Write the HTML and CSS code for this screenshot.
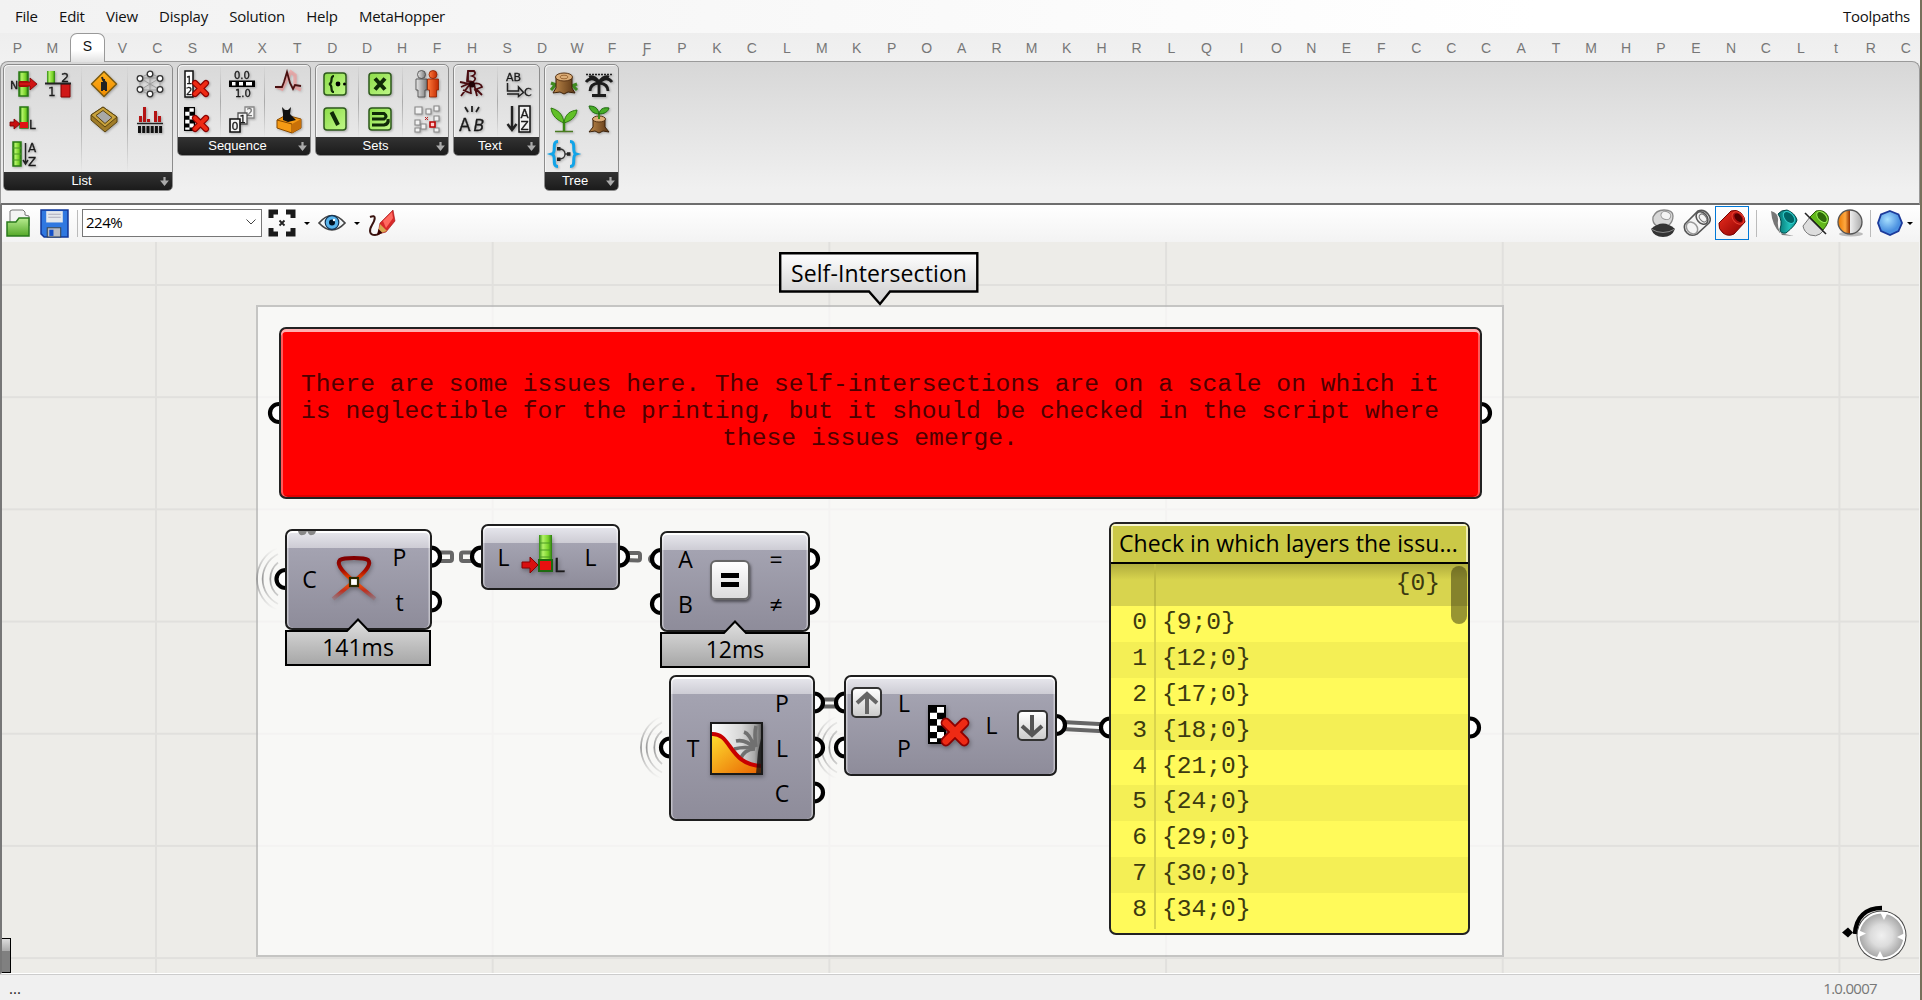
FILE: index.html
```html
<!DOCTYPE html>
<html lang="en">
<head>
<meta charset="utf-8">
<title>Toolpaths</title>
<link rel="stylesheet" href="styles.css">
</head>
<body>
<svg class="defs" width="0" height="0" aria-hidden="true">
  <defs>
    <linearGradient id="green" x1="0" x2="1" y1="0" y2="0"><stop offset="0" stop-color="#2f8a12"/><stop offset=".3" stop-color="#b2f266"/><stop offset=".7" stop-color="#7ad32a"/><stop offset="1" stop-color="#2a7d10"/></linearGradient>
    <linearGradient id="wood" x1="0" x2="1" y1="0" y2="0"><stop offset="0" stop-color="#c08a4a"/><stop offset="1" stop-color="#5a3515"/></linearGradient>
    <linearGradient id="orange" x1="0" x2="0" y1="0" y2="1"><stop offset="0" stop-color="#ffb21c"/><stop offset="1" stop-color="#f08c00"/></linearGradient>
    <linearGradient id="greyman" x1="0" x2="1" y1="0" y2="0"><stop offset="0" stop-color="#e8e8e8"/><stop offset="1" stop-color="#777"/></linearGradient>
    <linearGradient id="redman" x1="0" x2="1" y1="0" y2="0"><stop offset="0" stop-color="#ff7a3c"/><stop offset="1" stop-color="#c02800"/></linearGradient>
    <linearGradient id="tile" x1="0" x2="1" y1="0" y2="1"><stop offset="0" stop-color="#8cdc48"/><stop offset="1" stop-color="#c0f888"/></linearGradient>
    <linearGradient id="folder" x1="0" x2="0" y1="0" y2="1"><stop offset="0" stop-color="#b8ec90"/><stop offset="1" stop-color="#54a828"/></linearGradient>
    <linearGradient id="reds" x1="0" x2="1" y1="0" y2="1"><stop offset="0" stop-color="#f03020"/><stop offset="1" stop-color="#8a0000"/></linearGradient>
    <linearGradient id="teals" x1="0" x2="1" y1="0" y2="0"><stop offset="0" stop-color="#057070"/><stop offset=".6" stop-color="#20c0b8"/><stop offset="1" stop-color="#088"/></linearGradient>
    <linearGradient id="halfball" x1="0" x2="1" y1="0" y2="0"><stop offset="0" stop-color="#e87800"/><stop offset=".3" stop-color="#ffa840"/><stop offset=".5" stop-color="#903000"/><stop offset=".5" stop-color="#eee"/><stop offset="1" stop-color="#aaa"/></linearGradient>
    <radialGradient id="gem" cx=".4" cy=".35"><stop offset="0" stop-color="#a8e0ff"/><stop offset="1" stop-color="#4a90e0"/></radialGradient>
    <radialGradient id="dial"><stop offset="0" stop-color="#f0f0f0"/><stop offset=".5" stop-color="#dcdcdc"/><stop offset="1" stop-color="#a8a8a8"/></radialGradient>
    <linearGradient id="sun" x1="0" x2="1" y1="0" y2="1"><stop offset="0" stop-color="#ffe030"/><stop offset="1" stop-color="#e86000"/></linearGradient>
    <linearGradient id="sky" x1="0" x2="1" y1="0" y2="0"><stop offset="0" stop-color="#fff"/><stop offset=".6" stop-color="#d6d6d6"/><stop offset=".85" stop-color="#aaa"/><stop offset="1" stop-color="#555"/></linearGradient>
    <linearGradient id="loop" x1="0" x2="0" y1="0" y2="1"><stop offset="0" stop-color="#800000"/><stop offset=".3" stop-color="#a80c00"/><stop offset=".58" stop-color="#ff5a00"/><stop offset=".8" stop-color="#c03020"/><stop offset="1" stop-color="#a05050" stop-opacity=".3"/></linearGradient>
    <linearGradient id="tag" x1="0" x2="0" y1="0" y2="1"><stop offset="0" stop-color="#fff"/><stop offset=".75" stop-color="#d8d8d8"/><stop offset="1" stop-color="#d4d4d4"/></linearGradient>
    <linearGradient id="timer" x1="0" x2="0" y1="0" y2="1"><stop offset="0" stop-color="#e0e0e0"/><stop offset="1" stop-color="#a6a6a6"/></linearGradient>
    <linearGradient id="fadeWave" x1="0" x2="0" y1="0" y2="1"><stop offset="0" stop-color="#aaa" stop-opacity="0"/><stop offset=".5" stop-color="#999"/><stop offset="1" stop-color="#aaa" stop-opacity="0"/></linearGradient>
    <symbol id="cross" viewBox="0 0 14 14"><path d="M3 3L11 11M11 3L3 11" stroke="#8c0000" stroke-width="4.600" stroke-linecap="round"/><path d="M3 3L11 11M11 3L3 11" stroke="#ee2a14" stroke-width="3" stroke-linecap="round"/></symbol>
    <symbol id="checker" viewBox="0 0 9 20" preserveAspectRatio="none"><rect width="9" height="20" fill="#000"/><path d="M1 4h3.500v3.200h-3.500zM1 10.600h3.500v3.200h-3.500zM4.500 1h3.500v3h-3.500zM4.500 7.300h3.500v3.200h-3.500zM4.500 13.800h3.500v3.200h-3.500zM1 17h3.500v2h-3.500z" fill="#fff"/></symbol>
  </defs>
</svg>

<div class="window">
  <header class="menubar">
    <nav><span>File</span><span>Edit</span><span>View</span><span>Display</span><span>Solution</span><span>Help</span><span>MetaHopper</span></nav>
    <span class="doc">Toolpaths</span>
  </header>

  <div class="tabs">
    <i>P</i><i>M</i><i class="active">S</i><i>V</i><i>C</i><i>S</i><i>M</i><i>X</i><i>T</i><i>D</i><i>D</i><i>H</i><i>F</i><i>H</i><i>S</i><i>D</i><i>W</i><i>F</i><i>Ƒ</i><i>P</i><i>K</i><i>C</i><i>L</i><i>M</i><i>K</i><i>P</i><i>O</i><i>A</i><i>R</i><i>M</i><i>K</i><i>H</i><i>R</i><i>L</i><i>Q</i><i>I</i><i>O</i><i>N</i><i>E</i><i>F</i><i>C</i><i>C</i><i>C</i><i>A</i><i>T</i><i>M</i><i>H</i><i>P</i><i>E</i><i>N</i><i>C</i><i>L</i><i>t</i><i>R</i><i>C</i>
  </div>

  <div class="ribbon">
    <section class="panel list">
      <div class="groups">
        <div class="group two">
          <svg viewBox="0 0 28 28"><path d="M10 2h9v24h-9z" fill="url(#green)" stroke="#2a7a14" stroke-width="1.500"/><path d="M10 11h9v6h-9z" fill="#c01010"/><path d="M10 12h11v-4l7 6-7 6v-4H10z" fill="#d01414" stroke="#7a0000" stroke-width=".8"/><text x="1" y="18.500" class="ic" font-size="11">N</text></svg>
          <svg viewBox="0 0 28 28"><path d="M3 1h8v12H3z" fill="url(#green)"/><path d="M17 14h9v13h-9z" fill="#d01818" stroke="#800" stroke-width="1"/><path d="M1 13.500h26" stroke="#222" stroke-width="2"/><text x="17" y="12" class="ic" font-size="13">2</text><text x="4" y="26" class="ic" font-size="12">1</text></svg>
          <svg viewBox="0 0 28 28"><path d="M11 2h8v21h-8z" fill="url(#green)" stroke="#2a7a14" stroke-width="1.500"/><path d="M11 17h8v6h-8z" fill="#e01414"/><path d="M1 17h4v-3l6 5-6 5v-3H1z" fill="#c81010" stroke="#7a0000" stroke-width=".8"/><text x="20" y="24" class="ic" font-size="12">L</text></svg>
          <span></span>
          <svg viewBox="0 0 28 28"><path d="M4 2h8v24H4z" fill="url(#green)" stroke="#2a7a14" stroke-width="1.500"/><path d="M4 8h8M4 14h8M4 20h8" stroke="#4a9a24"/><path d="M16.500 3v20M14 20l2.500 4 2.500-4" stroke="#222" stroke-width="1.500" fill="none"/><text x="19" y="12" class="ic" font-size="12">A</text><text x="19" y="26" class="ic" font-size="12">Z</text></svg>
        </div>
        <div class="group">
          <svg viewBox="0 0 28 28"><path d="M14 1.500L26.500 14 14 26.500 1.500 14z" fill="url(#orange)" stroke="#7a5a10" stroke-width="1.500" stroke-linejoin="round"/><path d="M12 7l1 3 3 3v8M12 12v9M14 9v11" stroke="#222" stroke-width="2" fill="none"/></svg>
          <svg viewBox="0 0 28 28"><path d="M1 10l12-8 14 10v5L15 27 1 15z" fill="#a07c28" stroke="#5a4410" stroke-width="1"/><path d="M1 10l12-8 14 10-12 10z" fill="#c8a23c" stroke="#5a4410"/><path d="M6 10.500l7-5 9 7-7 6z" fill="#a8a8a8" stroke="#5a4410"/></svg>
        </div>
        <div class="group">
          <svg viewBox="0 0 28 28"><path d="M14 3L24 8v12L14 25 4 20V8zM4 8l20 12M24 8L4 20M14 3v22M4 8h20M4 20h20" stroke="#999" fill="none" stroke-width=".9"/><g fill="#fff" stroke="#333" stroke-width="1.300"><circle cx="14" cy="4" r="2.800"/><circle cx="24" cy="8.500" r="2.800"/><circle cx="24" cy="19.500" r="2.800"/><circle cx="14" cy="24" r="2.800"/><circle cx="4" cy="19.500" r="2.800"/><circle cx="4" cy="8.500" r="2.800"/></g></svg>
          <svg viewBox="0 0 28 28"><path d="M4.500 17v-6M8.500 17V2M12.500 17v-3M19.500 17V6M23.500 17v-6" stroke="#b41414" stroke-width="3"/><path d="M1 18.500h26" stroke="#222" stroke-width="1.400"/><path d="M3.500 21v7M7.700 21v7M12 21v7M16.200 21v7M20.400 21v7M24.600 21v7" stroke="#111" stroke-width="3"/></svg>
        </div>
      </div>
      <footer><b>List</b><svg viewBox="0 0 10 10"><path d="M4 1h2v3h3L5 9 1 4h3z" fill="#aaa"/></svg></footer>
    </section>

    <section class="panel three">
      <div class="groups">
        <div class="group">
          <svg viewBox="0 0 28 28"><path d="M2 1h8v26H2z" fill="#fff" stroke="#111" stroke-width="1.500"/><text x="3" y="14" class="ic" font-size="10">1</text><text x="3" y="25" class="ic" font-size="10">2</text><use href="#cross" x="8" y="9" width="19" height="19"/></svg>
          <svg viewBox="0 0 28 28"><use href="#checker" x="1" y="2" width="11" height="24"/><use href="#cross" x="8" y="9" width="19" height="19"/></svg>
        </div>
        <div class="group">
          <svg viewBox="0 0 28 28"><text x="6" y="8.500" class="ic" font-size="10">0.0</text><path d="M1 10.500h26v6.500H1z" fill="#000"/><path d="M4 12h3.500v3.500H4zM11 12h4v3.500h-4zM18 12h6v3.500h-6z" fill="#fff"/><text x="7" y="26.500" class="ic" font-size="10">1.0</text></svg>
          <svg viewBox="0 0 28 28"><g fill="#f4f4f4"><path d="M17 2h9v11h-9z" stroke="#888" stroke-width="1.300"/><path d="M10 8h9v11h-9z" stroke="#555" stroke-width="1.300"/><path d="M2 14h10v13H2z" stroke="#111" stroke-width="1.600"/></g><text x="18.500" y="11" class="ic" font-size="10" opacity=".6">2</text><text x="11.500" y="17.500" class="ic" font-size="10">1</text><text x="3.500" y="25" class="ic" font-size="11">0</text></svg>
        </div>
        <div class="group">
          <svg viewBox="0 0 28 28"><path d="M2 17l5 2 4-8 5-9 4 3v12l6 3" stroke="#ff8a8a" stroke-width="3.500" fill="none" opacity=".5"/><path d="M0 17h7l2-5 3-10 3 11 3 6 2-4 6 1" stroke="#4a1010" stroke-width="1.800" fill="none"/></svg>
          <svg viewBox="0 0 28 28"><path d="M2 15l9-5 15 4v9l-9 5-15-5z" fill="#f59a14" stroke="#8a4a00"/><path d="M2 15l15 4v9" fill="none" stroke="#8a4a00"/><path d="M17 19l9-5v9l-9 5z" fill="#c87008"/><path d="M8 15V9L7 2l3 3h3l3-3-1 7 6 6-8 2z" fill="#111"/></svg>
        </div>
      </div>
      <footer><b>Sequence</b><svg viewBox="0 0 10 10"><path d="M4 1h2v3h3L5 9 1 4h3z" fill="#aaa"/></svg></footer>
    </section>

    <section class="panel three">
      <div class="groups">
        <div class="group">
          <svg viewBox="0 0 28 28"><rect x="3" y="3" width="22" height="22" rx="3" fill="url(#tile)" stroke="#2e5a1c" stroke-width="1.500"/><path d="M13 6c-5 0 0 7-5 8 5 1 0 8 5 8" stroke="#102a08" stroke-width="2.200" fill="none"/><circle cx="17" cy="14" r="2.400"/><circle cx="23.500" cy="14" r="1.500"/></svg>
          <svg viewBox="0 0 28 28"><rect x="3" y="3" width="22" height="22" rx="3" fill="url(#tile)" stroke="#2e5a1c" stroke-width="1.500"/><path d="M10.500 7l6.500 13" stroke="#102a08" stroke-width="4"/></svg>
        </div>
        <div class="group">
          <svg viewBox="0 0 28 28"><rect x="3" y="3" width="22" height="22" rx="3" fill="url(#tile)" stroke="#2e5a1c" stroke-width="1.500"/><path d="M9 8.500l10 11M19 8.500l-10 11" stroke="#102a08" stroke-width="4"/></svg>
          <svg viewBox="0 0 28 28"><rect x="3" y="3" width="22" height="22" rx="3" fill="url(#tile)" stroke="#2e5a1c" stroke-width="1.500"/><path d="M6 8.500h12q4 2.700 0 5.500H6M6 20h12q5-1 4-6" stroke="#102a08" stroke-width="3.200" fill="none"/></svg>
        </div>
        <div class="group">
          <svg viewBox="0 0 28 28"><g stroke="#444" stroke-width=".8"><circle cx="8.500" cy="4.500" r="4" fill="url(#greyman)"/><path d="M3 9h11v11h-2v7H5v-7H3z" fill="url(#greyman)"/></g><g stroke="#8a2000" stroke-width=".8"><circle cx="20" cy="4.500" r="4" fill="url(#redman)"/><path d="M14.500 9h11v11h-2v7h-7v-7h-2z" fill="url(#redman)"/></g></svg>
          <svg viewBox="0 0 28 28"><g fill="#f2f2f2" stroke="#888" stroke-width="1.100"><path d="M2 2h7v7H2zM13 4h5v5h-5zM21 1h5v5h-5zM2 15h5v5H2zM8 19h5v5H8zM2 23h5v4H2zM21 11h5v5h-5zM21 23h5v4h-5z"/></g><path d="M17 17h5v5h-5z" fill="#fcc" stroke="#b00" stroke-width="1.600"/><path d="M12 12l3 3M15 12l-3 3" stroke="#b22"/></svg>
        </div>
      </div>
      <footer><b>Sets</b><svg viewBox="0 0 10 10"><path d="M4 1h2v3h3L5 9 1 4h3z" fill="#aaa"/></svg></footer>
    </section>

    <section class="panel text">
      <div class="groups">
        <div class="group">
          <svg viewBox="0 0 28 28"><g fill="none" stroke="#4a0c10" stroke-width="1.800"><path d="M10 1h6q3 3-2 5 6 2 1 6l-6-1zM10 2v9M3 26l9-12 1 10M5 20l7 3M14 14q9-2 10 3l-8 3M16 14l3 12M18 19l6 6M2 12l5 1 6 1M3 17l9-4"/></g><circle cx="14" cy="14.500" r="3" fill="#210406"/></svg>
          <svg viewBox="0 0 28 28"><path d="M7 2l3 5M14 1v6M21 2l-3 5" stroke="#222" stroke-width="1.800"/><text x="1" y="26" class="ic" font-size="17">A</text><text x="15.500" y="26" class="ic slant" font-size="16">B</text></svg>
        </div>
        <div class="group">
          <svg viewBox="0 0 28 28"><text x="1" y="11" class="ic" font-size="11">AB</text><path d="M2.500 13v8h11v-4l5 5.500-5 4V24H2" fill="none" stroke="#222" stroke-width="1.500"/><text x="19" y="26" class="ic" font-size="11">C</text></svg>
          <svg viewBox="0 0 28 28"><path d="M7 1v23M2.500 19L7 25l4.500-6" stroke="#222" stroke-width="2.400" fill="none"/><path d="M14 1h11v26H14z" fill="#f2f2f2" stroke="#111" stroke-width="1.500"/><text x="15.500" y="12.500" class="ic" font-size="12">A</text><text x="15.500" y="25" class="ic" font-size="12">Z</text></svg>
        </div>
      </div>
      <footer><b>Text</b><svg viewBox="0 0 10 10"><path d="M4 1h2v3h3L5 9 1 4h3z" fill="#aaa"/></svg></footer>
    </section>

    <section class="panel tree">
      <div class="groups">
        <div class="group two">
          <svg viewBox="0 0 28 28"><path d="M1 13l5 2M1 20l5-6M27 14l-5 2M27 20l-5-5" stroke="#3e8a20" stroke-width="3"/><path d="M6 7v11l-3 5 7-1 4 2 4-2 7 1-3-5V7z" fill="url(#wood)" stroke="#3a2008"/><ellipse cx="14" cy="7" rx="8.500" ry="4" fill="#dcae78" stroke="#5a3515"/><ellipse cx="14" cy="7" rx="4" ry="1.800" fill="none" stroke="#a06c38"/></svg>
          <svg viewBox="0 0 28 28"><path d="M1 4.500h26" stroke="#222" stroke-width="1.500" stroke-dasharray="2 1"/><path d="M14 26V13M7 25.500h14M14 13C9 7 4 8 1 12M14 13c5-6 10-5 13-1M14 12C10 6 7 6 4 7M14 12c4-6 7-6 10-5M13 13c-6 1-8 4-8 8M15 13c6 1 8 4 8 8" stroke="#1c1c1c" stroke-width="2.800" fill="none"/></svg>
          <svg viewBox="0 0 28 28"><path d="M14 26V16" stroke="#3a8a14" stroke-width="2.500"/><path d="M14 18C13 9 8 5 1 3c1 8 6 12 13 15zM14 18C15 9 20 6 27 5c-1 7-6 11-13 13z" fill="#62c028" stroke="#2e7a10"/><path d="M5 26.500h18" stroke="#4a7a20" stroke-width="1.500"/></svg>
          <svg viewBox="0 0 28 28"><path d="M8 14v8l-4 5 6-1 4 2 4-2 6 1-4-5v-8z" fill="url(#wood)" stroke="#3a2008"/><ellipse cx="14" cy="14" rx="6.500" ry="3" fill="#dcae78" stroke="#5a3515"/><path d="M14 14V8" stroke="#3a8a14" stroke-width="2"/><path d="M14 9C13 3 10 1 4 1c1 5 5 8 10 8zM14 9c1-5 4-7 10-6-1 4-5 6-10 6z" fill="#48ac28" stroke="#1e6a10"/></svg>
          <svg viewBox="0 0 28 28"><path d="M8 1.500c-7 0-1 11-6 12.500 5 1.500-1 12.500 6 12.500M20 1.500c7 0 1 11 6 12.500-5 1.500 1 12.500-6 12.500" stroke="#12a4e8" stroke-width="3" fill="none"/><path d="M9 9q6 0 6 5t-6 5M15 14h5" stroke="#333" fill="none" stroke-width="1.300"/><path d="M7 7h3.500v3.500H7zM7 17.500h3.500V21H7zM17 12.300h3.500v3.500H17z" fill="#222"/></svg>
        </div>
      </div>
      <footer><b>Tree</b><svg viewBox="0 0 10 10"><path d="M4 1h2v3h3L5 9 1 4h3z" fill="#aaa"/></svg></footer>
    </section>
  </div>

  <div class="toolbar">
    <svg class="t-open" viewBox="0 0 28 28" width="28" height="28"><path d="M5 2l2-1h11l2 2v3l4 1v10H5z" fill="#f4f4f4" stroke="#777"/><path d="M2 13h9l3-4h10v18H2z" fill="url(#folder)" stroke="#2a7a1c" stroke-width="1.500"/></svg>
    <svg class="t-save" viewBox="0 0 28 28" width="29" height="29"><path d="M1 1h26v26H4l-3-3z" fill="#2f78e0" stroke="#12389a" stroke-width="1.500"/><path d="M6 2h16v11H6z" fill="#e4e8ec"/><path d="M8 5h12M8 8h12" stroke="#aab"/><path d="M7 18h13v9H7z" fill="#b8bcc4" stroke="#345"/><path d="M9 20h4v6H9z" fill="#1450c8"/></svg>
    <hr>
    <div class="combo"><span>224%</span><svg viewBox="0 0 10 6" width="10" height="6"><path d="M.5.500L5 5 9.500.500" fill="none" stroke="#444"/></svg></div>
    <svg class="t-fit" viewBox="0 0 28 28" width="28" height="28"><path d="M3 9V3h7M18 3h7v6M25 19v6h-7M10 25H3v-6" fill="none" stroke="#1a1a1a" stroke-width="5"/><path d="M11.500 11.500l5 5M16.500 11.500l-5 5" stroke="#222" stroke-width="1.800"/></svg>
    <span class="caret"></span>
    <svg class="t-eye" viewBox="0 0 28 28" width="28" height="28"><path d="M1 14Q14-1 27 14 14 28 1 14z" fill="#f2f6f8" stroke="#444" stroke-width="1.700"/><circle cx="14" cy="13.500" r="6.800" fill="#58b4ec" stroke="#135" stroke-width="1.200"/><circle cx="14" cy="13.500" r="3" fill="#012"/><circle cx="16" cy="11" r="1.200" fill="#fff"/></svg>
    <span class="caret"></span>
    <svg class="t-sketch" viewBox="0 0 28 28" width="28" height="28"><path d="M2 8c7-3 5 3 2 8s-3 10 3 10 6-4 7-6" fill="none" stroke="#3a1410" stroke-width="2"/><path d="M10 25l2-11L25 1l2 11-9 11z" fill="#d82a2a" stroke="#a01010" stroke-width=".6"/><path d="M15 12l9-9 1 6-7 10z" fill="#ff6a60"/><path d="M10 25l2-10 7 7z" fill="#d8a850"/><path d="M9 26l1.500-6 4 4z" fill="#300"/></svg>
    <div class="right">
      <svg viewBox="0 0 28 28"><path d="M4 8Q7 1 15 1q9 0 9 6t-5 10H8q-5-3-4-9z" fill="#d8d8d8" stroke="#888" stroke-width="1.300"/><ellipse cx="17" cy="6.500" rx="5" ry="4" fill="#f4f4f4" stroke="#999" transform="rotate(20 17 6)"/><path d="M2 20q12-11 24 0-3 8-12 8T2 20z" fill="#333"/><path d="M2 20q12 7 24 0" fill="none" stroke="#888"/></svg>
      <svg viewBox="0 0 28 28"><path d="M2 15L15 2q6-2 10 3t1 9L14 25q-6 3-10-1t-2-9z" fill="#f4f4f4" stroke="#555" stroke-width="1.600"/><ellipse cx="19" cy="9" rx="5" ry="7" transform="rotate(-40 19 9)" fill="none" stroke="#555" stroke-width="1.600"/><ellipse cx="9" cy="19" rx="5" ry="6.500" transform="rotate(-40 9 19)" fill="none" stroke="#999" stroke-width="1.500"/><ellipse cx="20" cy="9" rx="3" ry="4.500" transform="rotate(-40 20 9)" fill="none" stroke="#777"/></svg>
      <span class="selected"><svg viewBox="0 0 28 28"><path d="M1 14L13 2q6-2 10 2t4 9L16 25q-6 3-11-1T1 14z" fill="url(#reds)" stroke="#700" stroke-width="1"/><ellipse cx="20" cy="9" rx="5" ry="7" transform="rotate(-42 20 9)" fill="#b01010" stroke="#e84030"/><ellipse cx="20.500" cy="9" rx="3" ry="5" transform="rotate(-42 20 9)" fill="#500"/></svg></span>
      <hr>
      <svg viewBox="0 0 28 28"><path d="M1 2q8 2 7 10t4 14l12 1-14-3Q2 16 1 2z" fill="#555" opacity=".8"/><path d="M8 5q3-4 9-4 8 3 10 10-1 5-11 13-6 1-6-4 3-8-2-15z" fill="url(#teals)" stroke="#044"/><ellipse cx="19" cy="8.500" rx="4.500" ry="7" transform="rotate(-42 19 8.500)" fill="#066" stroke="#3cc"/></svg>
      <svg viewBox="0 0 28 28"><path d="M1 17l7-9 13 14-3 3q-4 3-10 1-6-3-7-9z" fill="#ddd" stroke="#777"/><path d="M8 8l6-6q8-2 12 5 2 6-5 14z" fill="#62b81c" stroke="#2a5a08"/><ellipse cx="20" cy="8" rx="4" ry="6.500" transform="rotate(-42 20 8)" fill="#2e6a08" stroke="#9e5"/><path d="M3 4l21 21" stroke="#222" stroke-width="1.600"/></svg>
      <svg viewBox="0 0 28 28"><ellipse cx="15" cy="25" rx="12" ry="2.500" fill="#bbb"/><circle cx="14" cy="13" r="12" fill="url(#halfball)" stroke="#555" stroke-width="1.300"/></svg>
      <hr class="last">
      <svg viewBox="0 0 28 28"><path d="M14 2l8.500 3.500L26 14l-3.500 8L14 26l-9-4-3-8 3-8.500z" fill="url(#gem)" stroke="#1c3a9a" stroke-width="1.800"/></svg>
      <span class="caret"></span>
    </div>
  </div>

  <main class="canvas">
    <div class="backdrop"></div>
    <svg class="wires" viewBox="0 242 1918 731" width="1918" height="731">
      <g fill="none" stroke="#666" stroke-width="4">
        <path d="M436 552.500h14q2 0 2 2v4.500q0 2-2 2h-14"/>
        <path d="M476 552.500h-13q-2 0-2 2v4.500q0 2 2 2h13"/>
        <path d="M624 553h14q2 0 2 2v3.500q0 2-2 2l-14-.500"/>
        <path d="M820 699.500h18M820 706.500h18"/>
        <path d="M1062 722l46 2.500M1062 729l46 2.500"/>
      </g>
      <circle cx="653" cy="559" r="5" fill="#666"/>
      <g fill="none" stroke="url(#fadeWave)" stroke-width="1.700">
        <path d="M277 548a34 34 0 0 0 0 62M278 554a28 28 0 0 0 0 50M278 562.500a21.500 21.500 0 0 0 0 33"/>
        <path d="M661 716.500a34 34 0 0 0 0 62M662 722.500a28 28 0 0 0 0 50M662 731a21.500 21.500 0 0 0 0 33"/>
        <path d="M836 716.500a34 34 0 0 0 0 62M837 722.500a28 28 0 0 0 0 50M837 731a21.500 21.500 0 0 0 0 33"/>
      </g>
      <g class="grips">
        <circle cx="279" cy="413" r="9"/><circle cx="1481" cy="413" r="9"/>
        <circle cx="285.500" cy="579" r="9"/><circle cx="431" cy="556.700" r="9"/><circle cx="431" cy="601.500" r="9"/>
        <circle cx="481" cy="556.700" r="9"/><circle cx="619" cy="556.700" r="9"/>
        <circle cx="661" cy="559" r="9"/><circle cx="661" cy="604" r="9"/><circle cx="809" cy="559" r="9"/><circle cx="809" cy="604" r="9"/>
        <circle cx="670" cy="747.500" r="9"/><circle cx="814" cy="702.500" r="9"/><circle cx="814" cy="747.500" r="9"/><circle cx="814" cy="792.500" r="9"/>
        <circle cx="845" cy="702.500" r="9"/><circle cx="845" cy="747.500" r="9"/><circle cx="1056" cy="725" r="9"/>
        <circle cx="1110" cy="727.500" r="9"/><circle cx="1470" cy="727.500" r="9"/>
      </g>
    </svg>

    <div class="callout title"><svg viewBox="0 0 200 54" width="200" height="54"><path d="M1.200 1.200H198.300V39.500H111L101 52 90 39.500H1.200z" fill="url(#tag)" stroke="#000" stroke-width="2.400"/></svg><span>Self-Intersection</span></div>

    <div class="note">There are some issues here. The self-intersections are on a scale on which it<br>is neglectible for the printing, but it should be checked in the script where<br>these issues emerge.</div>

    <div class="node n-self">
      <div class="io"><span>C</span></div>
      <svg class="icon" viewBox="0 0 44 46" width="44" height="46"><path d="M1 44L25 24Q41 10 36 5 33 3 22 3 11 3 8 5 3 10 19 24L43 44" fill="none" stroke="url(#loop)" stroke-width="4" stroke-linejoin="round"/><rect x="18" y="23" width="8" height="8" fill="#fff" stroke="#2a2a00" stroke-width="2.200"/></svg>
      <div class="io"><span>P</span><span>t</span></div>
      <svg class="zig" viewBox="0 0 18 5" width="18" height="5"><path d="M0 0q1 5 5 4 3 0 4-4 2 5 5 4 3 0 4-4z" fill="#888"/></svg>
    </div>
    <div class="callout timer t-self"><svg viewBox="0 0 146 48" width="146" height="48"><path d="M1 13H62L73 1.500 84 13H145V47H1z" fill="url(#timer)" stroke="#000" stroke-width="2"/></svg><span>141ms</span></div>

    <div class="node n-length">
      <div class="io"><span>L</span></div>
      <svg class="icon" viewBox="0 0 44 40" width="44" height="40"><path d="M17 1h13v36H17z" fill="url(#green)"/><path d="M18 9h11M18 16h11M18 23h11" stroke="#4a9a24"/><path d="M17 26h13v11H17z" fill="#e81010" stroke="#1d6a10" stroke-width="2"/><path d="M0 28h8v-5l8 8-8 8v-5H0z" fill="#d81010" stroke="#8a0000"/><text x="32" y="38" class="ic" font-size="19">L</text></svg>
      <div class="io"><span>L</span></div>
    </div>

    <div class="node n-equal">
      <div class="io"><span>A</span><span>B</span></div>
      <span class="eq"></span>
      <div class="io"><span>=</span><span>≠</span></div>
    </div>
    <div class="callout timer t-equal"><svg viewBox="0 0 150 48" width="150" height="48"><path d="M1 13H64L75 1.500 86 13H149V47H1z" fill="url(#timer)" stroke="#000" stroke-width="2"/></svg><span>12ms</span></div>

    <div class="node n-stats">
      <div class="io"><span>T</span></div>
      <svg class="icon" viewBox="0 0 53 53" width="53" height="53"><rect x="1" y="1" width="51" height="51" fill="url(#sky)"/><path d="M30 38Q34 27 45 27M45 27Q36 24 24 27M44 26Q36 17 26 19M44 25Q40 12 34 10M46 25Q44 12 46 4" fill="none" stroke="#707070" stroke-width="3.600"/><path d="M1 12C22 10 18 43 52 44V52H1z" fill="url(#sun)"/><path d="M1 12C22 10 18 43 52 44" fill="none" stroke="#c80000" stroke-width="4"/><path d="M48 30L52 12V52H46z" fill="#111" opacity=".75"/><rect x="1" y="1" width="51" height="51" fill="none" stroke="#1a1a1a" stroke-width="2"/></svg>
      <div class="io"><span>P</span><span>L</span><span>C</span></div>
    </div>

    <div class="node n-cull">
      <span class="flat up"><svg viewBox="0 0 24 24" width="24" height="24"><path d="M12 23V3M2 12L12 3l10 9" fill="none" stroke="#666" stroke-width="4"/></svg></span>
      <div class="io"><span>L</span><span>P</span></div>
      <svg class="icon" viewBox="0 0 41 42" width="41" height="42"><use href="#checker" x="0" y="0" width="18" height="39"/><use href="#cross" x="11" y="11" width="32" height="32"/></svg>
      <div class="io"><span>L</span></div>
      <span class="flat"><svg viewBox="0 0 24 24" width="24" height="24"><path d="M12 1V21M2 12L12 21l10-9" fill="none" stroke="#555" stroke-width="4"/></svg></span>
    </div>

    <div class="data">
      <h2>Check in which layers the issu...</h2>
      <div class="rows">
        <div class="path"><span></span><em>{0}</em></div>
        <div><span>0</span><em>{9;0}</em></div>
        <div><span>1</span><em>{12;0}</em></div>
        <div><span>2</span><em>{17;0}</em></div>
        <div><span>3</span><em>{18;0}</em></div>
        <div><span>4</span><em>{21;0}</em></div>
        <div><span>5</span><em>{24;0}</em></div>
        <div><span>6</span><em>{29;0}</em></div>
        <div><span>7</span><em>{30;0}</em></div>
        <div><span>8</span><em>{34;0}</em></div>
      </div>
      <div class="thumb"></div>
    </div>

    <div class="edge-widget"></div>
    <svg class="compass" viewBox="0 0 70 60" width="70" height="60"><path d="M14 31C15 14 25 5 41 5" fill="none" stroke="#000" stroke-width="4.500"/><path d="M1 29.500l6-5 5 5-5 5z"/><circle cx="40.500" cy="32.500" r="25" fill="#444"/><circle cx="40.500" cy="32.500" r="24" fill="#fff"/><circle cx="40.500" cy="32.500" r="22" fill="url(#dial)"/><path d="M39 9h8l-4 8zM17 27l8 3.500-8 4zM64 30v8l-8-4zM35 56l4-8 4 8z" fill="#fff"/></svg>
  </main>

  <footer class="status"><span>...</span><span class="version">1.0.0007</span></footer>
</div>
</body>
</html>
```
FILE: styles.css
```css
* { box-sizing: border-box; }
body { margin: 0; font-family: "Open Sans", "Noto Sans", sans-serif; }
.defs { position: absolute; }
.window {
  display: flex; flex-direction: column;
  width: 1922px; height: 1000px; overflow: hidden;
  background: #f0f0f0;
  border-right: 2px solid #77705c;
}
.ic { font-family: "DejaVu Sans", sans-serif; fill: #1a1a1a; stroke: #1a1a1a; stroke-width: .3px; }
.slant { font-style: italic; }

.menubar {
  display: flex; justify-content: space-between; align-items: center;
  height: 33px; padding: 0 10px 2px 15px;
  background: linear-gradient(90deg, #f2f2f2, #fff 80%);
  font-size: 15px; letter-spacing: -.25px; color: #111;
}
.menubar nav { display: flex; gap: 21.300px; }

.tabs { display: flex; height: 28px; background: linear-gradient(#eee, #f1f1f1); }
.tabs i {
  flex: none; width: 34.980px; padding-top: 7px;
  font: 14px/16px "Liberation Sans", sans-serif; color: #777; text-align: center;
}
.tabs .active {
  color: #111; background: linear-gradient(#fff 60%, #e2e2e2); padding-top: 4px;
  border: 1px solid #999; border-bottom: 0; border-radius: 7px 7px 0 0;
  height: 29px; position: relative;
}

.ribbon {
  display: flex; align-items: flex-start; gap: 4px;
  height: 144px; padding: 2px 4px 0 2px;
  background: linear-gradient(#d7d7d7, #f0f0f0 90%);
  border: solid #9a9a9a; border-width: 1px 1px 2px; border-bottom-color: #6e6e6e;
  border-radius: 8px 8px 0 0;
}
.panel {
  flex: none; overflow: hidden; border: 1px solid #8c8c8c; border-radius: 5px;
  background: linear-gradient(#d9d9d9, #ececec); box-shadow: inset 1px 1px #f4f4f4;
}
.panel.list { width: 170px; }
.panel.three { width: 134px; }
.panel.text { width: 87px; }
.panel.tree { width: 75px; }
.groups { display: flex; padding-top: 1px; height: 72px; }
.list .groups, .tree .groups { height: 107px; }
.group { display: grid; grid-auto-rows: 35px; place-items: center; align-content: start; flex: 1; }
.group + .group { border-left: 1px solid; border-image: linear-gradient(transparent, #aaa, transparent) 1; }
.group.two { grid-template-columns: 35px 35px; flex: none; width: 77px; padding-left: 1px; }
.tree .group.two { width: 73px; }
.three .group:first-child { flex: none; width: 42px; padding-right: 5px; }
.three .group:last-child { padding-left: 3px; }
.text .group:first-child { flex: none; width: 43px; padding-right: 7px; }
.group svg { width: 28px; height: 28px; overflow: visible; filter: drop-shadow(1px 1px 1px #0004); }
.panel footer {
  display: flex; align-items: center; height: 18px; padding-right: 1px;
  background: linear-gradient(#333, #1b1b1b); color: #fff;
}
.panel b { flex: 1; text-align: center; font: 13px/16px "Liberation Sans", sans-serif; }
.panel footer svg { width: 11px; height: 11px; margin-right: 1px; }

.toolbar {
  display: flex; align-items: center; height: 37px; padding-bottom: 1px;
  background: linear-gradient(#fff, #f3f3f3); border-left: 2px solid #777;
}
.toolbar svg { flex: none; }
.toolbar hr { width: 1px; height: 27px; margin: 0; border: 0; background: #bbb; }
.t-open { margin-left: 3px; }
.t-save { margin-left: 7px; margin-right: 8px; }
.combo {
  display: flex; align-items: center; justify-content: space-between;
  width: 180px; height: 28px; margin: 0 6px 0 4px; padding: 0 5px 2px 3px;
  background: #fff; border: 1px solid #777; font-size: 15px; letter-spacing: -.5px;
}
.caret { width: 0; border: 3px solid transparent; border-top-color: #000; border-bottom: 0; margin: 1px 9px 0 8px; }
.t-eye { margin-left: -1px; }
.t-sketch { margin-left: -1px; }
.right { display: flex; align-items: center; margin-left: auto; padding-right: 7px; gap: 6px; }
.right > svg { width: 28px; height: 28px; }
.right .selected { display: flex; padding: 2px; margin: 0 1px 0 -2px; border: 1px solid #0078d7; width: 34px; height: 34px; }
.right hr + svg { margin: 0 -2px 0 7px; }
.right .last + svg { margin: 0 0 0 -1px; }
.right .caret { margin: 0 0 0 -3px; }

.canvas {
  position: relative; height: 732px; overflow: hidden;
  background-color: #edece8;
  background-image:
    linear-gradient(90deg, #e1e0dd 2px, transparent 2px),
    linear-gradient(#e1e0dd 2px, transparent 2px);
  background-size: 336.700px 100%, 100% 112.200px;
  background-position: 153px 0, 0 42px;
  border-left: 2px solid #777; border-bottom: 1px solid #fff; border-right: 1px solid #f4f4f4;
}
.canvas > * { position: absolute; }
.backdrop { left: 254px; top: 63px; width: 1248px; height: 652px; border: 2px solid rgba(120,120,120,.4); background: rgba(255,255,255,.62); }
.wires { left: -2px; top: 0; }
.grips { fill: #fff; stroke: #000; stroke-width: 4.200px; }

.callout { display: flex; justify-content: center; color: #000; }
.callout svg { position: absolute; left: 0; top: 0; }
.callout span { position: relative; }
.title { left: 777px; top: 10px; width: 200px; font-size: 23px; line-height: 42px; letter-spacing: .1px; }
.timer { font-size: 23px; line-height: 34px; padding-top: 12px; height: 48px; }
.t-self { left: 283px; top: 376px; width: 146px; }
.t-equal { left: 658px; top: 378px; width: 150px; }

.note {
  left: 277px; top: 85px; width: 1203px; height: 172px; padding: 42px 21px 0 0;
  border: 2.500px solid #222; border-radius: 7px; background: #f00;
  box-shadow: inset 0 3px #ffb0b0, inset 2px 0 #ff5a5a, inset -2px 0 #ff5a5a, inset 0 -2px #e00000;
  font: 24.640px/27.200px "Liberation Mono", monospace; color: #4d0000; text-align: center; white-space: nowrap;
}

.node {
  display: grid; align-items: center; justify-items: center;
  border: 2.500px solid #1e1e1e; border-radius: 7px;
  background: linear-gradient(#e8e8ee, #cdccd4 17px, #a4a3b1 17px, #8e8c9a);
  box-shadow: inset 0 2px #fff, inset 1.500px 0 #ffffff70, inset -1.500px 0 #ffffff70;
  font-size: 23px; color: #000;
}
.io { display: grid; grid-auto-rows: 45px; align-items: center; justify-items: center; line-height: 46px; }
.io span { display: block; height: 47px; }
.icon { filter: drop-shadow(1px 2px 2px #0005); overflow: visible; }
.n-self { left: 283px; top: 287px; width: 147px; height: 101px; grid-template-columns: 45px 44px 47px; }
.n-self .icon { margin-top: -3px; }
.n-length { left: 479px; top: 282px; width: 139px; height: 66px; grid-template-columns: 41px 42px 49px; }
.n-length .icon { margin: -7px 0 0 -2px; }
.n-equal { left: 658px; top: 289px; width: 150px; height: 101px; grid-template-columns: 47px 42px 50px; }
.n-stats { left: 667px; top: 433px; width: 146px; height: 146px; grid-template-columns: 44px 42px 50px; }
.n-cull { left: 842px; top: 433px; width: 213px; height: 101px; grid-template-columns: 41px 34px 54px 33px 48px; }
.zig { position: absolute; left: 11px; top: 0; }
.eq {
  width: 40px; height: 40px; margin-top: -4px; border: 2px solid #666; border-radius: 6px;
  background: linear-gradient(#000, #000) 50% 11px / 18px 5px no-repeat,
    linear-gradient(#000, #000) 50% 20px / 18px 5px no-repeat, linear-gradient(#fff, #ddd);
  box-shadow: 1px 2px 3px #0007;
}
.flat {
  display: flex; align-items: center; justify-content: center;
  width: 31px; height: 31px; border: 2px solid #333; border-radius: 5px;
  background: linear-gradient(#fff, #ccc);
}
.flat.up { margin-bottom: 46px; }

.data {
  left: 1107px; top: 280px; width: 361px; height: 413px; overflow: hidden;
  border: 2.500px solid #222; border-radius: 7px; background: #fffa5a;
}
.data h2 {
  margin: 0; height: 40px; padding-left: 8px; border-bottom: 2.500px solid #000;
  background: #cbc947; box-shadow: inset 0 2px #f6f4d0, inset 2px 0 #f0eeb0, inset -2px 0 #f0eeb0;
  font-size: 23px; font-weight: 400; line-height: 38px; letter-spacing: .09px; white-space: nowrap;
}
.rows { font: 24.640px/32px "Liberation Mono", monospace; color: #3c3a10; }
.rows div { display: flex; height: 35.900px; }
.rows div:nth-child(odd) { background: #f4ef55; }
.rows div.path { height: 42px; background: linear-gradient(#b0ad3d, #d8d44e 16px); line-height: 38px; }
.rows span { width: 45px; padding-right: 7px; text-align: right; border-right: 2px solid #d9d44c; }
.rows em { font-style: normal; padding-left: 6px; }
.rows .path em { margin-left: auto; padding-right: 28px; }
.rows .path span { border-color: #c0bc42; }
.thumb { position: absolute; right: 1px; top: 42px; width: 16px; height: 58px; border-radius: 8px; background: rgba(50,48,10,.5); }

.edge-widget { left: 0; bottom: 0; width: 9px; height: 35px; border: 1px solid #000; border-left: 0; background: linear-gradient(#ddd, #aaa 12px, #808080 12px); }
.compass { left: 1839px; top: 661px; }

.status {
  display: flex; justify-content: space-between; align-items: center; flex: 1;
  padding: 0 43px 0 9px; border-top: 1px solid #ccc; background: #f0f0f0; font-size: 15px; color: #222;
}
.version { color: #777; letter-spacing: -.7px; }
```
